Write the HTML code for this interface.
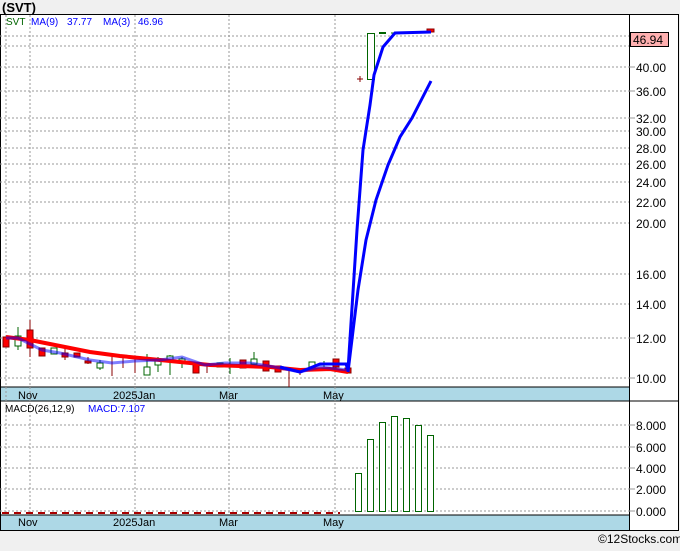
<!DOCTYPE html>
<html><head><meta charset="utf-8"><style>
body{margin:0;background:#f0f0f0;width:680px;height:546px;overflow:hidden;font-family:"Liberation Sans",sans-serif}
</style></head><body>
<svg width="680" height="546" xmlns="http://www.w3.org/2000/svg" font-family="Liberation Sans, sans-serif">
<rect width="680" height="546" fill="#f0f0f0"/>
<text x="2" y="12" font-size="13" font-weight="bold" fill="#000">(SVT)</text>
<rect x="0.5" y="14.5" width="678" height="516" fill="#fff" stroke="#000"/>
<rect x="1" y="387" width="628" height="14" fill="#add8e6"/>
<rect x="1" y="515" width="628" height="15" fill="#add8e6"/>
<line x1="0" y1="387" x2="629" y2="387" stroke="#000"/>
<line x1="0" y1="401" x2="679" y2="401" stroke="#000"/>
<line x1="0" y1="515" x2="629" y2="515" stroke="#000"/>
<line x1="629.5" y1="14" x2="629.5" y2="531" stroke="#000"/>
<g stroke="#999" stroke-dasharray="2,2" stroke-width="1">
<line x1="6" y1="15" x2="6" y2="515"/><line x1="30" y1="15" x2="30" y2="515"/><line x1="135" y1="15" x2="135" y2="515"/><line x1="229" y1="15" x2="229" y2="515"/><line x1="335" y1="15" x2="335" y2="515"/>
<line x1="0" y1="36" x2="629" y2="36"/><line x1="0" y1="46" x2="629" y2="46"/><line x1="0" y1="67" x2="629" y2="67"/><line x1="0" y1="91" x2="629" y2="91"/><line x1="0" y1="118" x2="629" y2="118"/><line x1="0" y1="131" x2="629" y2="131"/><line x1="0" y1="148" x2="629" y2="148"/><line x1="0" y1="164" x2="629" y2="164"/><line x1="0" y1="182" x2="629" y2="182"/><line x1="0" y1="202" x2="629" y2="202"/><line x1="0" y1="223" x2="629" y2="223"/><line x1="0" y1="274" x2="629" y2="274"/><line x1="0" y1="304" x2="629" y2="304"/><line x1="0" y1="338" x2="629" y2="338"/><line x1="0" y1="378" x2="629" y2="378"/>
<line x1="0" y1="425" x2="629" y2="425"/><line x1="0" y1="447" x2="629" y2="447"/><line x1="0" y1="468" x2="629" y2="468"/><line x1="0" y1="489" x2="629" y2="489"/><line x1="0" y1="511" x2="629" y2="511"/>
</g>
<g font-size="12" fill="#000">
<text x="636" y="72">40.00</text><text x="636" y="96">36.00</text><text x="636" y="123">32.00</text><text x="636" y="136">30.00</text><text x="636" y="153">28.00</text><text x="636" y="169">26.00</text><text x="636" y="187">24.00</text><text x="636" y="207">22.00</text><text x="636" y="228">20.00</text><text x="636" y="279">16.00</text><text x="636" y="309">14.00</text><text x="636" y="343">12.00</text><text x="636" y="383">10.00</text>
<text x="636" y="430">8.000</text><text x="636" y="452">6.000</text><text x="636" y="473">4.000</text><text x="636" y="494">2.000</text><text x="636" y="516">0.000</text>
</g>
<g stroke="#999"><line x1="629" y1="67" x2="635" y2="67"/><line x1="629" y1="91" x2="635" y2="91"/><line x1="629" y1="118" x2="635" y2="118"/><line x1="629" y1="378" x2="635" y2="378"/><line x1="629" y1="338" x2="635" y2="338"/><line x1="629" y1="425" x2="635" y2="425"/><line x1="629" y1="447" x2="635" y2="447"/><line x1="629" y1="468" x2="635" y2="468"/><line x1="629" y1="489" x2="635" y2="489"/><line x1="629" y1="511" x2="635" y2="511"/></g>
<rect x="630.5" y="32.5" width="38" height="14" fill="#ffb0b0" stroke="#000"/>
<text x="633" y="44" font-size="12">46.94</text>
<g font-size="11" fill="#000"><text x="18" y="399">Nov</text><text x="113" y="399">2025Jan</text><text x="219" y="399">Mar</text><text x="323" y="399">May</text>
<text x="18" y="526">Nov</text><text x="113" y="526">2025Jan</text><text x="219" y="526">Mar</text><text x="323" y="526">May</text></g>
<g font-size="10"><text x="6" y="25" fill="#006400">SVT</text><text x="31" y="25" fill="#00f">MA(9)</text><text x="67" y="25" fill="#00f">37.77</text><text x="103" y="25" fill="#00f">MA(3)</text><text x="138" y="25" fill="#00f">46.96</text>
<text x="5" y="412" fill="#000">MACD(26,12,9)</text><text x="88" y="412" fill="#00f">MACD:7.107</text></g>
<g stroke-width="1">
<rect x="3" y="337" width="6" height="10" fill="#f00" stroke="#800"/>
<line x1="18" y1="327" x2="18" y2="350" stroke="#006400"/><rect x="15" y="336" width="6" height="10" fill="#fff" stroke="#006400"/>
<line x1="30" y1="320" x2="30" y2="357" stroke="#800"/><rect x="27" y="330" width="6" height="18" fill="#f00" stroke="#800"/>
<rect x="39" y="348" width="6" height="8" fill="#f00" stroke="#800"/>
<rect x="51" y="348" width="6" height="6" fill="#fff" stroke="#006400"/>
<line x1="65" y1="348" x2="65" y2="360" stroke="#800"/><rect x="62" y="353" width="6" height="4" fill="#f00" stroke="#800"/>
<rect x="74" y="353" width="6" height="4" fill="#f00" stroke="#800"/>
<line x1="88" y1="357" x2="88" y2="364" stroke="#800"/><rect x="85" y="361" width="6" height="2" fill="#f00" stroke="#800"/>
<line x1="100" y1="360" x2="100" y2="370" stroke="#006400"/><rect x="97" y="363" width="6" height="5" fill="#fff" stroke="#006400"/>
<line x1="112" y1="356" x2="112" y2="376" stroke="#800"/>
<line x1="123" y1="355" x2="123" y2="368" stroke="#800"/>
<line x1="135" y1="358" x2="135" y2="373" stroke="#800"/>
<line x1="147" y1="354" x2="147" y2="367" stroke="#006400"/><rect x="144" y="367" width="6" height="8" fill="#fff" stroke="#006400"/>
<line x1="158" y1="357" x2="158" y2="372" stroke="#006400"/><rect x="155" y="359" width="6" height="6" fill="#fff" stroke="#006400"/>
<line x1="170" y1="355" x2="170" y2="375" stroke="#006400"/><rect x="167" y="356" width="6" height="5" fill="#fff" stroke="#006400"/>
<line x1="182" y1="357" x2="182" y2="368" stroke="#006400"/><rect x="179" y="359" width="6" height="4" fill="#fff" stroke="#006400"/>
<rect x="193" y="363" width="6" height="10" fill="#f00" stroke="#800"/>
<line x1="207" y1="363" x2="207" y2="373" stroke="#800"/>
<rect x="217" y="363" width="6" height="4" fill="#fff" stroke="#006400"/>
<line x1="230" y1="358" x2="230" y2="374" stroke="#006400"/>
<rect x="240" y="360" width="6" height="8" fill="#f00" stroke="#800"/>
<line x1="254" y1="352" x2="254" y2="366" stroke="#006400"/><rect x="251" y="359" width="6" height="5" fill="#fff" stroke="#006400"/>
<rect x="263" y="361" width="6" height="10" fill="#f00" stroke="#800"/>
<rect x="275" y="366" width="6" height="6" fill="#f00" stroke="#800"/>
<line x1="289" y1="367" x2="289" y2="387" stroke="#800"/>
<line x1="300" y1="369" x2="300" y2="375" stroke="#800"/>
<rect x="309" y="362" width="6" height="5" fill="#fff" stroke="#006400"/>
<line x1="324" y1="361" x2="324" y2="367" stroke="#006400"/>
<line x1="336" y1="360" x2="336" y2="371" stroke="#800"/><rect x="333" y="359" width="6" height="8" fill="#f00" stroke="#800"/>
<rect x="345" y="368" width="6" height="5" fill="#f00" stroke="#800"/>
<line x1="357" y1="79" x2="363" y2="79" stroke="#800"/><line x1="360" y1="76" x2="360" y2="82" stroke="#800"/>
<rect x="367.5" y="33.5" width="7" height="46" fill="#fff" stroke="#006400"/>
<line x1="379" y1="33" x2="386" y2="33" stroke="#006400" stroke-width="2"/>
<line x1="391" y1="33" x2="398" y2="33" stroke="#006400"/>
<rect x="427" y="29" width="7" height="3" fill="#f00" stroke="#800"/>
</g>
<polyline points="6,337 30,340 60,346 90,352 120,356 150,359 180,362 210,365 240,366 270,367 300,370 330,369 348,372" fill="none" stroke="#f00" stroke-width="4"/>
<polyline points="6,338 18,338 30,344 42,350 60,353 90,360 112,363 135,361 160,360 182,357 205,365 225,363 250,363 275,367 300,372 320,367 348,370" fill="none" stroke="#00f" stroke-width="3" stroke-opacity="0.5"/>
<polyline points="280,367 300,372 320,364 346,364 348,370 357,230 363,150 370,105 374,75 383,47 395,33 431,32" fill="none" stroke="#00f" stroke-width="3"/>
<polyline points="348,372 358,290 366,240 376,200 388,165 400,137 412,118 431,81" fill="none" stroke="#00f" stroke-width="3"/>
<g fill="#fff" stroke="#006400" stroke-width="1">
<rect x="355.5" y="473.5" width="6" height="38"/><rect x="367.5" y="439.5" width="6" height="72"/><rect x="379.5" y="422.5" width="6" height="89"/><rect x="391.5" y="416.5" width="6" height="95"/><rect x="403.5" y="418.5" width="6" height="93"/><rect x="415.5" y="425.5" width="6" height="86"/><rect x="427.5" y="435.5" width="6" height="76"/>
</g>
<line x1="2" y1="513" x2="340" y2="513" stroke="#a00" stroke-width="2" stroke-dasharray="7,5"/>
<text x="598" y="543" font-size="12" fill="#000">©12Stocks.com</text>
</svg>
</body></html>
